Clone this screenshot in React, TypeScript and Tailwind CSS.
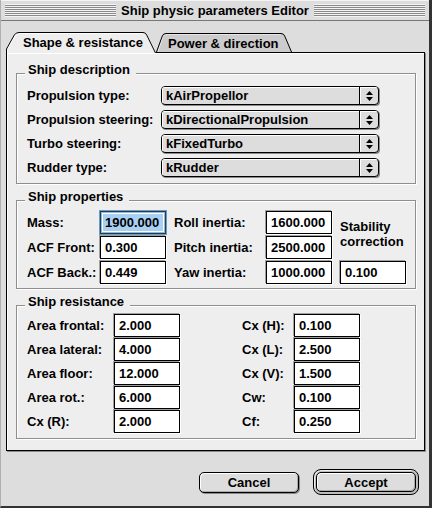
import React from "react";

function Stripes() {
  return (
    <div className="h-[13px] flex-1 border-b border-[#f4f4f4] bg-[image:repeating-linear-gradient(to_bottom,#f4f4f4_0px,#f4f4f4_1px,#8a8a8a_1px,#8a8a8a_2px)]" />
  );
}

function Popup({ value }: { value: string }) {
  return (
    <div className="flex h-[19px] w-[218px] overflow-hidden rounded-[4px] border border-black bg-[#dddddd] shadow-[1px_1px_0_#8a8a8a]">
      <div className="flex-1 pl-[4px] leading-[17px] shadow-[inset_1px_1px_0_#fff]">{value}</div>
      <div className="flex w-[19px] items-center justify-center border-l border-black shadow-[inset_1px_1px_0_#fff]">
        <svg width="7" height="10" viewBox="0 0 7 10">
          <path d="M0 4 L3.5 0 L7 4 Z M0 6 H7 L3.5 10 Z" fill="#000" />
        </svg>
      </div>
    </div>
  );
}

function Field({ value }: { value: string }) {
  return (
    <div className="h-[23px] w-[66px] border border-black bg-white pl-[4px] leading-[21px] shadow-[1px_1px_0_#fff,-1px_-1px_0_#a0a0a0]">
      {value}
    </div>
  );
}

function FocusField({ value }: { value: string }) {
  return (
    <div className="flex h-[23px] w-[66px] border border-[#1e3f55] bg-white p-[2px] shadow-[0_0_0_1px_#6d9bbd,inset_0_0_0_1px_#8fb7d6]">
      <div className="flex-1 bg-[#a9d0f2] pl-[2px] leading-[17px]">{value}</div>
    </div>
  );
}

function Group({
  title,
  className,
  children,
}: {
  title: string;
  className: string;
  children: React.ReactNode;
}) {
  return (
    <div
      className={`relative w-[400px] border border-[#8e8e8e] shadow-[1px_1px_0_#fff,inset_1px_1px_0_#fff] ${className}`}
    >
      <span className="absolute -top-[12px] left-[8px] bg-[#eeeeee] pl-[3px] pr-[6px]">{title}</span>
      {children}
    </div>
  );
}

export default function App() {
  const popups = [
    ["Propulsion type:", "kAirPropellor"],
    ["Propulsion steering:", "kDirectionalPropulsion"],
    ["Turbo steering:", "kFixedTurbo"],
    ["Rudder type:", "kRudder"],
  ];
  const resist = [
    ["Area frontal:", "2.000", "Cx (H):", "0.100"],
    ["Area lateral:", "4.000", "Cx (L):", "2.500"],
    ["Area floor:", "12.000", "Cx (V):", "1.500"],
    ["Area rot.:", "6.000", "Cw:", "0.100"],
    ["Cx (R):", "2.000", "Cf:", "0.250"],
  ];

  return (
    <div className="flex h-[508px] w-[432px] flex-col overflow-hidden border-b-2 border-l border-r-[3px] border-b-[#333] border-l-[#b0b0b0] border-r-[#333] bg-[#dddddd] font-['Liberation_Sans',Arial,sans-serif] text-[13px] font-bold leading-[15px] text-black">
      {/* Title bar */}
      <div className="flex h-[21px] shrink-0 items-center gap-[4px] border-b border-[#777] px-[4px] shadow-[inset_0_1px_0_#f4f4f4]">
        <Stripes />
        <span className="whitespace-nowrap px-[1px]">Ship physic parameters Editor</span>
        <Stripes />
      </div>

      <div className="flex flex-col pl-[5px] pt-[11px]">
        {/* Tabs */}
        <div className="relative z-10 flex h-[20px]">
          <div className="relative h-[20px] w-[150px] pl-[17px] pt-[3px]">
            <svg className="absolute left-0 top-0" width="150" height="21" viewBox="0 0 150 21">
              <path d="M0 21 L0 17 L8 2.5 Q9.5 0 13 0 L137 0 Q140 0 141 2.5 L150 21 Z" fill="#eeeeee" />
              <path d="M1.5 21 L1.5 17.3 L9.2 3.5 Q10.4 1.5 13 1.5 L136.5 1.5" fill="none" stroke="#ffffff" />
              <path
                d="M0.5 21 L0.5 17 L8.3 3 Q9.7 0.5 13 0.5 L137 0.5 Q139.7 0.5 140.7 3 L149.5 21"
                fill="none"
                stroke="#000"
              />
            </svg>
            <span className="relative whitespace-nowrap">Shape &amp; resistance</span>
          </div>
          <div className="relative h-[20px] w-[136px] pl-[12px] pt-[4px]">
            <svg className="absolute left-0 top-[1px]" width="136" height="19" viewBox="0 0 136 19">
              <path d="M0 19 L6 2.5 Q7 0 10 0 L125 0 Q128 0 129 2.5 L136 19 Z" fill="#cccccc" />
              <path d="M1.8 19 L7.3 3.3 Q8.2 1.5 10 1.5 L124.5 1.5" fill="none" stroke="#e6e6e6" />
              <path
                d="M0.5 19 L6.3 3 Q7.3 0.5 10 0.5 L125 0.5 Q127.7 0.5 128.7 3 L135.5 19"
                fill="none"
                stroke="#000"
              />
            </svg>
            <span className="relative whitespace-nowrap">Power &amp; direction</span>
          </div>
        </div>

        {/* Panel */}
        <div className="flex h-[399px] w-[419px] flex-col border border-black bg-[#eeeeee] pl-[9px] pt-[20px] shadow-[1px_1px_0_#8c8c8c,inset_1px_1px_0_#fff]">
          <Group title="Ship description" className="h-[111px] pl-[10px] pt-[12px]">
            <div className="flex flex-col gap-[5px]">
              {popups.map(([l, v]) => (
                <div key={l} className="flex items-center">
                  <span className="w-[134px] whitespace-nowrap">{l}</span>
                  <Popup value={v} />
                </div>
              ))}
            </div>
          </Group>

          <Group title="Ship properties" className="mt-[16px] h-[89px] pl-[10px] pt-[10px]">
            <div className="flex">
              <div className="flex flex-col gap-[2px]">
                <div className="flex items-center">
                  <span className="w-[73px]">Mass:</span>
                  <FocusField value="1900.000" />
                  <span className="ml-[8px] w-[92px]">Roll inertia:</span>
                  <Field value="1600.000" />
                </div>
                <div className="flex items-center">
                  <span className="w-[73px]">ACF Front:</span>
                  <Field value="0.300" />
                  <span className="ml-[8px] w-[92px]">Pitch inertia:</span>
                  <Field value="2500.000" />
                </div>
                <div className="flex items-center">
                  <span className="w-[73px]">ACF Back.:</span>
                  <Field value="0.449" />
                  <span className="ml-[8px] w-[92px]">Yaw inertia:</span>
                  <Field value="1000.000" />
                </div>
              </div>
              <div className="ml-[8px] flex flex-col justify-between">
                <div className="mt-[8px] leading-[15px]">
                  Stability
                  <br />
                  correction
                </div>
                <Field value="0.100" />
              </div>
            </div>
          </Group>

          <Group title="Ship resistance" className="mt-[16px] h-[134px] pl-[10px] pt-[8px]">
            <div className="flex flex-col gap-[1px]">
              {resist.map(([l1, v1, l2, v2]) => (
                <div key={l1} className="flex items-center">
                  <span className="w-[87px] whitespace-nowrap">{l1}</span>
                  <Field value={v1} />
                  <span className="ml-[62px] w-[52px] whitespace-nowrap">{l2}</span>
                  <Field value={v2} />
                </div>
              ))}
            </div>
          </Group>
        </div>
      </div>

      {/* Buttons */}
      <div className="mt-[18px] flex h-[26px] items-center justify-end gap-[14px] pr-[10px]">
        <div className="flex h-[21px] w-[100px] items-center justify-center rounded-[5px] border border-black bg-[#dddddd] shadow-[1px_1px_0_#888,inset_1px_1px_0_#fff,inset_-1px_-1px_0_#aaa]">
          Cancel
        </div>
        <div className="flex h-[26px] w-[106px] rounded-[8px] border border-black bg-[#bdbdbd] p-[2px] shadow-[inset_1px_1px_0_#eee]">
          <div className="flex flex-1 items-center justify-center rounded-[5px] border border-black bg-[#dddddd] shadow-[inset_1px_1px_0_#fff,inset_-1px_-1px_0_#aaa]">
            Accept
          </div>
        </div>
      </div>
    </div>
  );
}
